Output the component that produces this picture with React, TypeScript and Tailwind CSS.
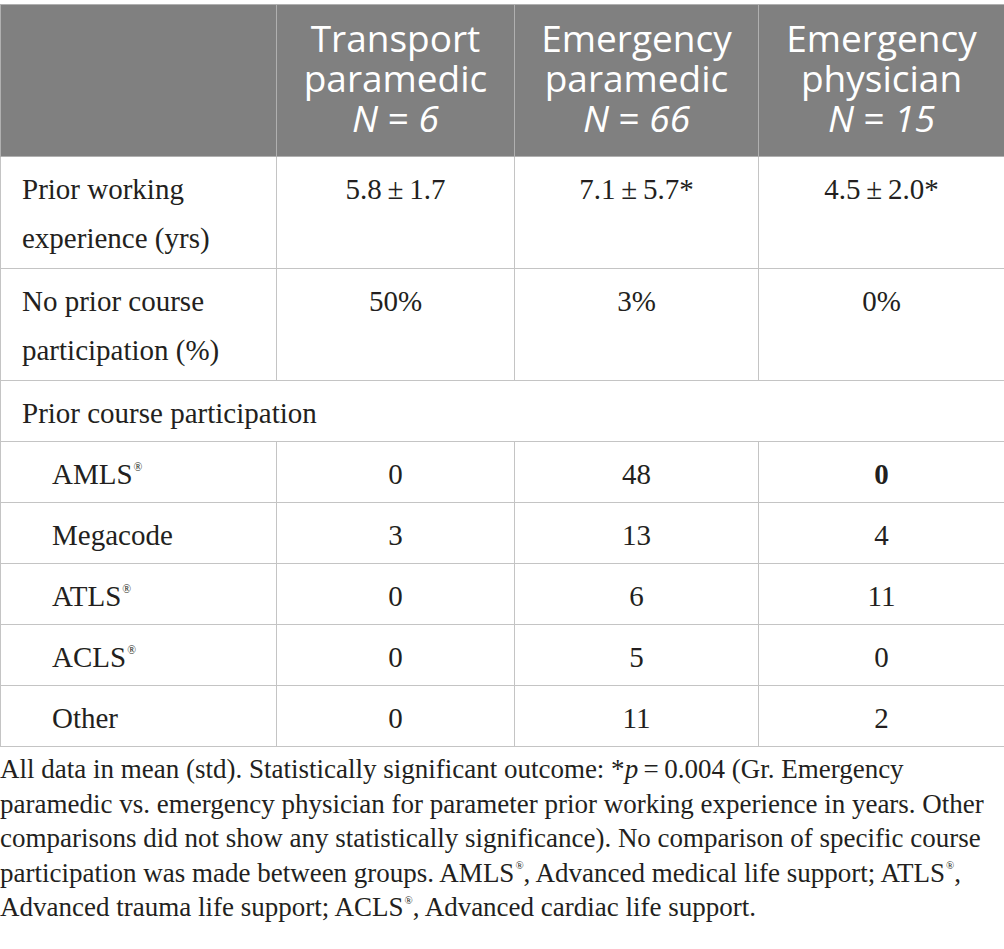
import React from 'react'

const serif = { fontFamily: '"Liberation Serif", "Times New Roman", serif' }

function Reg() {
  return <span className="relative -top-[1.15em] text-[0.4em] leading-none ml-[1px]">®</span>
}

interface Row {
  label: React.ReactNode;
  values: React.ReactNode[];
  indent?: boolean;
  tall?: boolean;
}

const rows: Row[] = [
  { label: <>Prior working<br />experience (yrs)</>, values: ['5.8\u2009±\u20091.7', '7.1\u2009±\u20095.7*', '4.5\u2009±\u20092.0*'], tall: true },
  { label: <>No prior course<br />participation (%)</>, values: ['50%', '3%', '0%'], tall: true },
]

const courses: Row[] = [
  { label: <>AMLS<Reg /></>, values: ['0', '48', <b key="b">0</b>], indent: true },
  { label: 'Megacode', values: ['3', '13', '4'], indent: true },
  { label: <>ATLS<Reg /></>, values: ['0', '6', '11'], indent: true },
  { label: <>ACLS<Reg /></>, values: ['0', '5', '0'], indent: true },
  { label: 'Other', values: ['0', '11', '2'], indent: true },
]

function BodyRow({ row }: { row: Row }) {
  const h = row.tall ? 'h-[112px]' : 'h-[61px]'
  return (
    <tr className={h}>
      <td className={`border border-[#c4c4c4] align-top pt-[8px] ${row.indent ? 'pl-[51px]' : 'pl-[21px]'}`}>{row.label}</td>
      {row.values.map((v, i) => (
        <td key={i} className="border border-[#c4c4c4] align-top pt-[8px] text-center">{v}</td>
      ))}
    </tr>
  )
}

function Head({ a, b, n }: { a: string; b: string; n: string }) {
  return (
    <th className="border border-[#b0b0b0] bg-[#808080] text-white font-normal text-center align-top pt-[13px]">
      {a}<br />{b}<br /><i>N</i>{' = '}<i>{n}</i>
    </th>
  )
}

export default function App() {
  return (
    <div className="w-[1004px] bg-white pt-[4px]">
      <table className="w-[1004px] table-fixed border-collapse text-[29px] leading-[49px] text-[#231f20]" style={serif}>
        <colgroup>
          <col className="w-[276px]" />
          <col className="w-[238px]" />
          <col className="w-[244px]" />
          <col className="w-[246px]" />
        </colgroup>
        <thead>
          <tr className="h-[152px] text-[37px] leading-[40px]" style={{ fontFamily: '"Open Sans", Lato, sans-serif' }}>
            <th className="border border-[#b0b0b0] bg-[#808080]"></th>
            <Head a="Transport" b="paramedic" n="6" />
            <Head a="Emergency" b="paramedic" n="66" />
            <Head a="Emergency" b="physician" n="15" />
          </tr>
        </thead>
        <tbody>
          {rows.map((r, i) => <BodyRow key={i} row={r} />)}
          <tr className="h-[61px]">
            <td colSpan={4} className="border border-[#c4c4c4] align-top pt-[8px] pl-[21px]">Prior course participation</td>
          </tr>
          {courses.map((r, i) => <BodyRow key={i} row={r} />)}
        </tbody>
      </table>
      <p className="mt-[5px] pr-[8px] text-[27px] leading-[34.5px] text-[#231f20]" style={serif}>
        All data in mean (std). Statistically significant outcome: *<i>p</i>{'\u2009=\u2009'}0.004 (Gr. Emergency paramedic vs. emergency physician for parameter prior working experience in years. Other comparisons did not show any statistically significance). No comparison of specific course participation was made between groups. AMLS<Reg />, Advanced medical life support; ATLS<Reg />, Advanced trauma life support; ACLS<Reg />, Advanced cardiac life support.
      </p>
    </div>
  )
}
